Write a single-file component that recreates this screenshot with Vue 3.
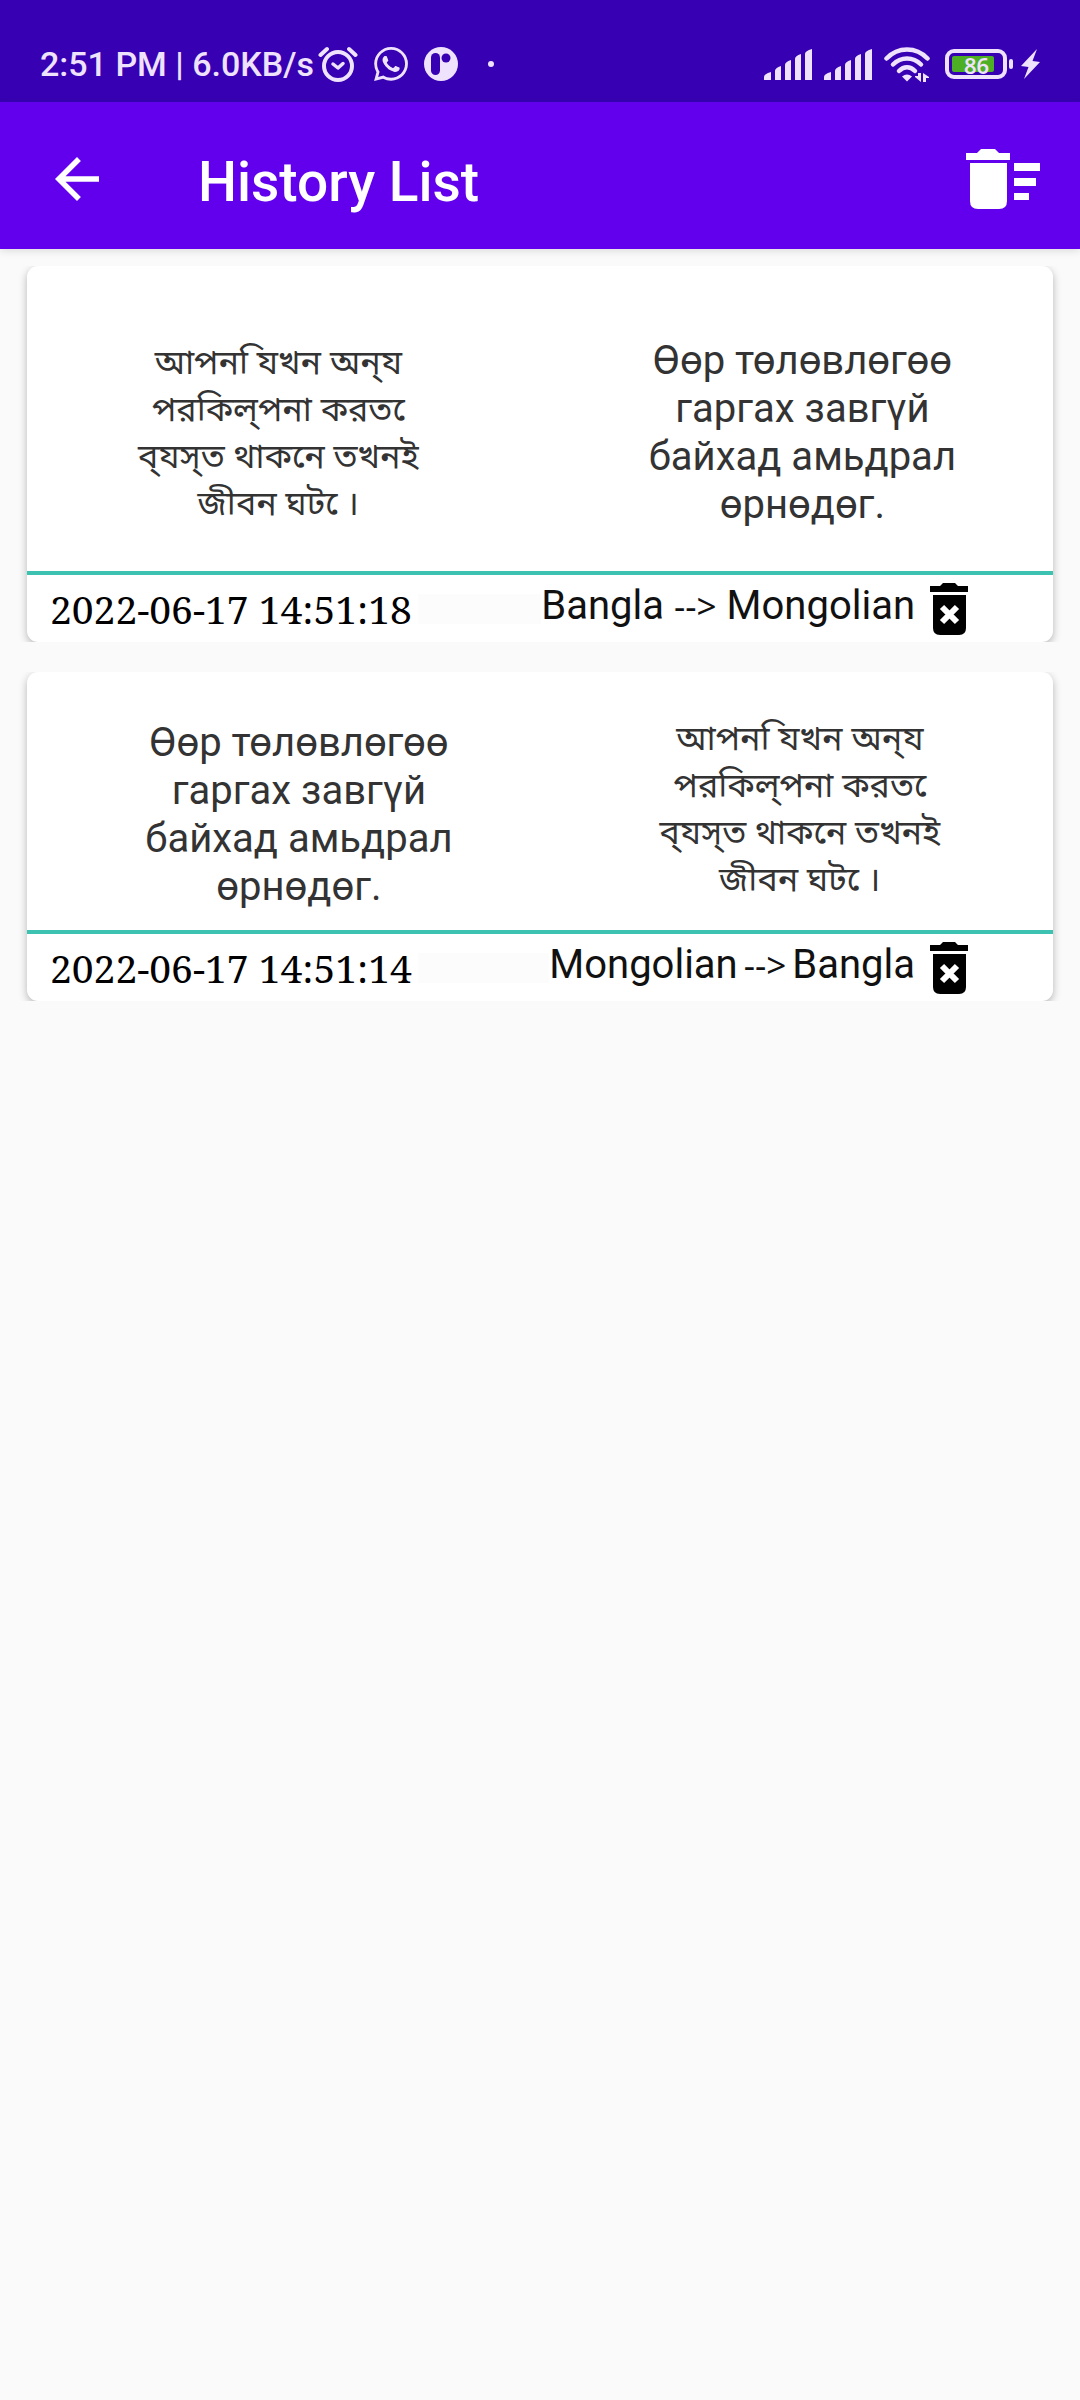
<script setup>
const bangla = 'আপন\u00A0িযখন অন্\u200Cয\n\u00A0পরকিল্\u200Cপনা করত\u00A0ে\nব্\u200Cযস্\u200Cত থাকনে তখনই\nজীবন ঘট\u00A0ে।'
const mongolian = 'Өөр төлөвлөгөө\nгаргах завгүй\nбайхад амьдрал\nөрнөдөг.'

const items = [
  { id: 1, size: 'tall', from: 'Bangla', to: 'Mongolian', source: bangla, target: mongolian, time: '2022-06-17 14:51:18' },
  { id: 2, size: 'short', from: 'Mongolian', to: 'Bangla', source: mongolian, target: bangla, time: '2022-06-17 14:51:14' },
]
const langCode = { Bangla: 'bn', Mongolian: 'mn' }
</script>

<template>
  <div class="screen">
    <div class="status-bar">
      <div class="status-left">
        <span class="status-text">2:51 PM | 6.0KB/s</span>
        <svg class="alarm" width="40" height="36" viewBox="0 0 40 36" fill="none" stroke="#efe2fd" stroke-linecap="round">
          <circle cx="20" cy="20" r="14" stroke-width="4" />
          <path d="M2.500 9 L9 3 M37.500 9 L31 3" stroke-width="4" />
          <path d="M15 18 L20 22 L25 17.500" stroke-width="3.500" stroke-linejoin="round" />
        </svg>
        <svg class="whatsapp" width="34" height="34" viewBox="0 0 24 24" fill="#efe2fd">
          <path d="M.06 24l1.680-6.160a11.870 11.870 0 0 1-1.590-5.950C.16 5.340 5.500 0 12.050 0a11.820 11.820 0 0 1 8.410 3.490 11.820 11.820 0 0 1 3.480 8.410c0 6.560-5.340 11.890-11.890 11.890a11.900 11.900 0 0 1-5.690-1.450L.06 24zm6.600-3.810c1.670 1 3.270 1.590 5.390 1.590 5.450 0 9.890-4.430 9.890-9.880 0-5.460-4.420-9.890-9.880-9.890-5.460 0-9.890 4.430-9.890 9.880 0 2.230.65 3.890 1.750 5.630l-1 3.650 3.740-.98zm11.390-5.460c-.07-.13-.27-.2-.57-.35-.3-.15-1.760-.87-2.030-.97-.27-.1-.47-.15-.67.15-.2.3-.77.97-.94 1.170-.17.2-.35.220-.64.07-.3-.15-1.260-.46-2.390-1.480-.88-.79-1.480-1.760-1.650-2.060-.17-.3-.02-.46.130-.6.130-.140.3-.350.450-.520.150-.180.2-.3.300-.500.1-.2.050-.370-.030-.520-.07-.15-.67-1.610-.92-2.210-.24-.58-.49-.5-.67-.51l-.57-.01c-.2 0-.52.070-.79.370-.27.300-1.040 1.020-1.040 2.480 0 1.460 1.060 2.880 1.210 3.070.150.200 2.100 3.200 5.080 4.490.71.310 1.260.490 1.690.620.710.230 1.360.2 1.870.120.570-.09 1.760-.72 2.010-1.410.25-.69.25-1.290.17-1.410z" />
        </svg>
        <svg class="round-app" width="34" height="34" viewBox="0 0 34 34">
          <circle cx="17" cy="17" r="17" fill="#efe2fd" />
          <rect x="7" y="6" width="9" height="22" rx="4.500" fill="#3700b3" />
          <circle cx="22" cy="11" r="4.500" fill="#3700b3" />
        </svg>
        <span class="dot"></span>
      </div>
      <div class="status-right">
        <svg v-for="n in 2" :key="n" class="signal" width="48" height="31" viewBox="0 0 48 31" fill="#efe2fd">
          <path d="M0 31V28Q0 25 7 23V31ZM11 31V22Q11 19 17 17V31ZM21 31V16Q21 13 27 11V31ZM31 31V10Q31 7 37 5V31ZM41 31V5Q41 2 48 0V31Z" />
        </svg>
        <svg class="wifi" width="47" height="35" viewBox="0 0 47 35" fill="none" stroke="#efe2fd" stroke-width="4.500" stroke-linecap="round">
          <path d="M2.500 11.500 C14 -0.500 32 -0.500 43.500 11.500" />
          <path d="M9 17.500 C17 9.500 29 9.500 37 17.500" />
          <path d="M15 24 C20 19 26 19 31 24" />
          <path d="M18 29.500 Q23 25.500 28 29.500 L23 34.500Z" fill="#efe2fd" stroke="none" />
          <path d="M37 26V35L31 30V29H34V26ZM39 35V26L45 30V31H42V35Z" fill="#efe2fd" stroke="none" />
        </svg>
        <div class="battery">
          <div class="battery-case"><span class="battery-level">86</span></div>
          <span class="battery-tip"></span>
        </div>
        <svg width="19" height="30" viewBox="0 0 19 30" fill="#efe2fd">
          <path d="M16 0 L0 17 L7.500 18 L3 30 L19 13 L11.500 12Z" />
        </svg>
      </div>
    </div>

    <header class="app-bar">
      <button class="icon-button" type="button" aria-label="Back">
        <svg width="66" height="66" viewBox="0 0 24 24" fill="#fff">
          <path d="M20 11H7.830l5.590-5.590L12 4l-8 8 8 8 1.410-1.410L7.830 13H20v-2z" />
        </svg>
      </button>
      <h1 class="title">History List</h1>
      <button class="icon-button" type="button" aria-label="Clear history">
        <svg width="74" height="60" viewBox="0 0 74 60" fill="#fff">
          <path d="M0 4H11L15 0H29L33 4H44V11H0Z" />
          <path d="M4 14H41V52Q41 60 33 60H12Q4 60 4 52Z" />
          <path d="M48 14H74V22H48ZM48 29H70V37H48ZM48 44H63V51H48Z" />
        </svg>
      </button>
    </header>

    <main class="list">
      <div v-for="item in items" :key="item.id" class="row">
        <article class="card" :class="item.size">
          <div class="texts">
            <p class="phrase" :class="langCode[item.from]" :lang="langCode[item.from]">{{ item.source }}</p>
            <p class="phrase" :class="langCode[item.to]" :lang="langCode[item.to]">{{ item.target }}</p>
          </div>
          <footer class="meta">
            <time class="time">{{ item.time }}</time>
            <span class="filler"></span>
            <div class="direction">
              <span>{{ item.from }}</span>
              <span class="arrow">--&gt;</span>
              <span>{{ item.to }}</span>
            </div>
            <button class="icon-button" type="button" aria-label="Delete entry">
              <svg width="38" height="52" viewBox="0 0 38 52">
                <path d="M0 3H10L13 0H25L28 3H38V9H0Z" />
                <path d="M3 12H36V45Q36 52 29 52H10Q3 52 3 45Z" />
                <path d="M12 24L27 39M27 24L12 39" stroke="#fff" stroke-width="6" />
              </svg>
            </button>
          </footer>
        </article>
      </div>
    </main>
  </div>
</template>

<style>
body {
  margin: 0;
  background: #fafafa;
}
</style>

<style scoped>
.screen {
  min-height: 100vh;
  background: #fafafa;
  font-family: Roboto, "Noto Sans", sans-serif;
}
.status-bar {
  display: flex;
  justify-content: space-between;
  box-sizing: border-box;
  height: 102px;
  padding: 26px 40px 0;
  background: #3700b3;
  color: #efe2fd;
}
.status-left,
.status-right {
  display: flex;
  align-items: center;
}
.status-text {
  font-size: 34px;
  font-weight: 500;
  white-space: nowrap;
}
.alarm {
  margin-left: 4px;
}
.whatsapp,
.round-app {
  margin-left: 16px;
}
.dot {
  width: 6px;
  height: 6px;
  margin-left: 30px;
  border-radius: 50%;
  background: #efe2fd;
}
.signal {
  margin-right: 12px;
}
.battery {
  display: flex;
  align-items: center;
  gap: 2px;
  margin: 0 8px 0 14px;
}
.battery-case {
  box-sizing: border-box;
  width: 62px;
  height: 30px;
  padding: 3px;
  border: 4px solid #efe2fd;
  border-radius: 9px;
}
.battery-level {
  display: block;
  box-sizing: border-box;
  width: 42px;
  height: 16px;
  padding-left: 12px;
  border-radius: 2px;
  background: #4caf24;
  font-family: "Noto Sans", sans-serif;
  font-size: 22px;
  font-weight: 600;
  line-height: 18px;
}
.battery-tip {
  width: 4px;
  height: 10px;
  border-radius: 2px;
  background: #efe2fd;
}
.app-bar {
  position: relative;
  display: flex;
  align-items: center;
  box-sizing: border-box;
  height: 147px;
  padding: 6px 40px 0 44px;
  background: #6200ee;
  box-shadow: 0 2px 8px rgba(0, 0, 0, 0.12);
  color: #fff;
}
.icon-button {
  display: flex;
  padding: 0;
  border: 0;
  background: none;
  cursor: pointer;
}
.title {
  flex: 1;
  margin: 6px 0 0 88px;
  font-size: 55px;
  font-weight: 500;
  line-height: 64px;
}
.list {
  display: flex;
  flex-direction: column;
  gap: 30px;
  padding-top: 17px;
}
.row {
  overflow: hidden;
  padding: 0 27px;
}
.card {
  border-radius: 11px;
  background: #fff;
  box-shadow: 0 3px 9px rgba(0, 0, 0, 0.28);
}
.texts {
  display: grid;
  align-items: center;
  padding-top: 28px;
  border-bottom: 4px solid #3dc1b0;
}
.tall .texts {
  grid-template-columns: 49fr 51fr;
  min-height: 277px;
}
.short .texts {
  grid-template-columns: 53fr 47fr;
  min-height: 230px;
}
.phrase {
  margin: 0;
  color: #333;
  font-size: 40px;
  line-height: 48px;
  text-align: center;
  white-space: pre-line;
}
.phrase.bn {
  font-family: "Noto Sans Bengali", Roboto, "Noto Sans", sans-serif;
  font-size: 34px;
  font-weight: 400;
  line-height: 47px;
}
.tall .phrase.mn {
  padding-left: 22px;
}
.tall .phrase.bn {
  padding-top: 6px;
}
.short .phrase.bn {
  padding: 0 24px 6px 0;
}
.meta {
  display: flex;
  align-items: center;
  height: 67px;
  padding: 0 85px 0 23px;
  color: #111;
}
.time {
  color: #000;
  font-family: "Noto Serif", "Liberation Serif", serif;
  font-size: 39px;
  line-height: 48px;
}
.filler {
  flex: 1;
  height: 30px;
  margin-left: 6px;
  background: #fcfcfc;
}
.direction {
  display: flex;
  align-items: baseline;
  gap: 10px;
  margin-right: 15px;
  padding-bottom: 6px;
  font-size: 40px;
  line-height: 48px;
}
.short .direction {
  gap: 6px;
}
.arrow {
  font-family: "Noto Sans", sans-serif;
  font-size: 35px;
  font-weight: 400;
}
</style>
